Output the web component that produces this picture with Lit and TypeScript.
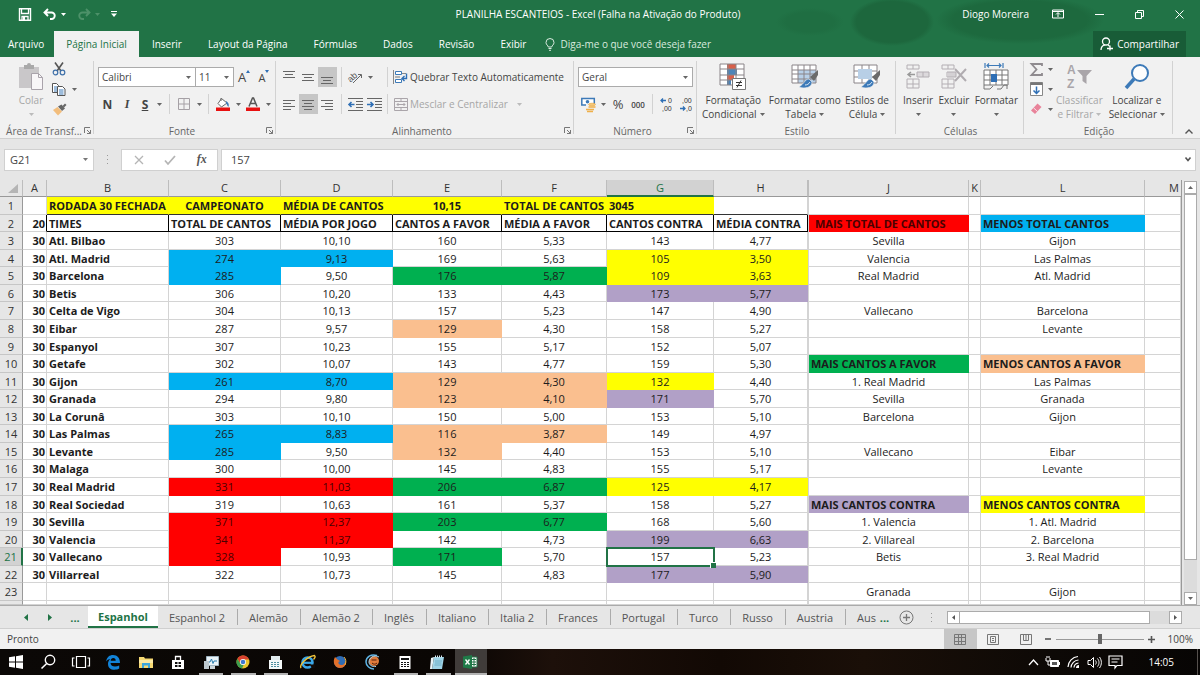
import { LitElement, html, css, svg, nothing } from "lit";
import type { TemplateResult } from "lit";
import { customElement, state } from "lit/decorators.js";
import { classMap } from "lit/directives/class-map.js";

const base = css`
  * { box-sizing: border-box; }
  button, select, input {
    font: inherit; color: inherit; margin: 0; padding: 0;
    border: 0; border-radius: 0; background: none;
  }
  button { display: flex; align-items: center; justify-content: center; white-space: nowrap; }
  svg { display: block; flex: none; overflow: visible; }
  svg text { font-family: "Liberation Sans", sans-serif; }
`;

const icon = (w: number, h: number, body: unknown) =>
  html`<svg width=${w} height=${h} viewBox="0 0 ${w} ${h}" fill="none" aria-hidden="true">${body}</svg>`;

const caret = (color = "#666") => icon(5, 3, svg`<path d="M0 0h5L2.5 3z" fill=${color}/>`);

const cells = (x: number, y: number, w: number, h: number, c: number, r: number, stroke: string) => {
  let d = `M${x} ${y}h${w}v${h}h${-w}z`;
  for (let i = 1; i < c; i++) d += `M${x + Math.round((w * i) / c)} ${y}v${h}`;
  for (let i = 1; i < r; i++) d += `M${x} ${y + Math.round((h * i) / r)}h${w}`;
  return svg`<path d=${d} stroke=${stroke} fill="none"/>`;
};

const lines = (rows: number[][]) =>
  svg`<path d=${rows.map(([x, y, w]) => `M${x} ${y}h${w}`).join("")} stroke="#666"/>`;

const brush = svg`
  <path d="M27 7 19 14l4 4 4-6z" fill="#6b6b6b"/>
  <path d="M18 16c-4 0-4 4-10 8 5 2 13 1 13-5z" fill="#3d7ab8" stroke="#f1f1f1" stroke-width=".6"/>
  <path d="M14 22c2 0 4-1 5-3" stroke="#dceaf6"/>`;

const I = {
  save: icon(14, 13, svg`<path d="M1.500.8h11v11.500h-11z" stroke="#fff" stroke-width="1.400"/><path d="M3.500 1v4.500h7V1M4 12V8.500h6V12" stroke="#fff" stroke-width="1.300"/><path d="M5 9h2v3H5z" fill="#fff"/>`),
  undo: icon(14, 12, svg`<path d="M5 1 1.500 4.500 5 8M2 4.500h6.500a3.200 3.200 0 0 1 0 6.500H7" stroke="#fff" stroke-width="1.900"/>`),
  redo: icon(14, 12, svg`<path d="M9 1l3.500 3.500L9 8M12 4.500H5.500a3.200 3.200 0 0 0 0 6.500H7" stroke="#4d9169" stroke-width="1.900"/>`),
  custom: icon(6, 6, svg`<path d="M0 .5h6" stroke="#fff"/><path d="M0 2.500h6L3 6z" fill="#fff"/>`),
  bulb: icon(10, 13, svg`<path d="M3.300 9C3 7.300 1 6.800 1 4.500a4 4 0 0 1 8 0C9 6.800 7 7.300 6.700 9zM3.500 10.500h3M4 12.300h2" stroke="#d9eadf"/>`),
  person: icon(13, 14, svg`<circle cx="6" cy="4.500" r="3.500" stroke="#fff" stroke-width="1.300"/><path d="M1 13c0-3 2-4.700 4-5.200M8 8l2 1.500M7 11.500h6M10 8.500v5" stroke="#fff" stroke-width="1.300"/>`),
  ribbonOpt: icon(12, 10, svg`<path d="M.5 1h11v8H.5zM.5 2.500h11M6 8V4M4 5.500l2-2 2 2" stroke="#fff"/>`),
  min: icon(9, 9, svg`<path d="M0 4.500h9" stroke="#fff"/>`),
  restore: icon(9, 9, svg`<path d="M.5 2.500h6v6h-6zM2.500 2.500v-2h6v6h-2" stroke="#fff"/>`),
  close: icon(9, 9, svg`<path d="M.5.5l8 8M8.500.5l-8 8" stroke="#fff"/>`),
  paste: icon(26, 28, svg`<path d="M1 4h20v21H1z" fill="#c9c7c9"/><path d="M6 2h3a2 2 0 0 1 4 0h3v4H6z" fill="#a9a9a9"/><path d="M13.500 10.500h7l4 4v12h-11z" fill="#f8f6f8" stroke="#a9a3ab"/><path d="M20.500 10.500v4h4" stroke="#a9a3ab"/>`),
  cut: icon(14, 14, svg`<path d="M3 .5 9 9M11 .5 5 9" stroke="#555" stroke-width="1.600"/><circle cx="3.500" cy="10.500" r="2.300" stroke="#3d6fa8" stroke-width="1.200"/><circle cx="10.500" cy="10.500" r="2.300" stroke="#3d6fa8" stroke-width="1.200"/>`),
  copy: icon(14, 13, svg`<path d="M.5.5h4l2 2v7h-6z" fill="#fff" stroke="#555"/><path d="M2 4h3M2 6h3M2 8h3" stroke="#3d7ab8"/><path d="M5.500 3.500h5l2.500 2.500v6.500H5.500z" fill="#fff" stroke="#555"/><path d="M7 7h4.500M7 9h4.500M7 11h4.500" stroke="#3d7ab8"/>`),
  painter: icon(15, 13, svg`<path d="M10.500 3 13 .5l1.500 1.500L12 4.500z" fill="#666"/><path d="M6 3.500 9.500 1.500l3.500 4L10 8z" fill="#666"/><path d="M5.500 4 1 7l5 5.500 4-4z" fill="#f2bd7c"/>`),
  borders: icon(12, 12, svg`<path d="M.5.5h11v11H.5zM6 .5v11M.5 6h11" stroke="#a5a0a5"/>`),
  bucket: icon(14, 14, svg`<path d="M5.500 1.500 11 6 5.500 10 2 6.500zM5 4V1" stroke="#666" fill="#fff"/><path d="M10 4c2 1 3.500 3 2.500 6-1.500-1-1.500-3-2.500-4z" fill="#3d7ab8"/><path d="M0 10.500h14V14H0z" fill="#e81010"/>`),
  fontColor: icon(14, 14, svg`<path d="M3 9.500 6.500 1h1L11 9.500M4.500 6.500h5" stroke="#555" stroke-width="1.500"/><path d="M0 10.500h14V14H0z" fill="#e81010"/>`),
  orient: icon(15, 14, svg`<text x="0" y="10" font-size="9" fill="#555" transform="rotate(-42 5 8)">ab</text><path d="M5 13 13 5M10 4.500h3.500V8" stroke="#666"/>`),
  outdent: icon(15, 13, svg`${lines([[8, 3.5, 7], [8, 6.5, 7], [8, 9.5, 7], [0, 12.5, 15], [0, .5, 15]])}<path d="M6.500 6.500H1M3.500 4 1 6.500 3.500 9" stroke="#2f6fb5" stroke-width="1.600"/>`),
  indent: icon(15, 13, svg`${lines([[8, 3.5, 7], [8, 6.5, 7], [8, 9.5, 7], [0, 12.5, 15], [0, .5, 15]])}<path d="M0 6.500h5.500M3.500 4 6 6.500 3.500 9" stroke="#2f6fb5" stroke-width="1.600"/>`),
  wrap: icon(15, 14, svg`<path d="M.5 0v14M8 3.500h5" stroke="#888"/><path d="M2.500 1.500h6v3h-6zM2.500 9.500h6v3h-6z" fill="#fff" stroke="#3d7ab8"/><path d="M2 7h5" stroke="#777"/><path d="M13.500 3.500v5H9.500M11.500 6 9 8.500 11.500 11" stroke="#2f6fb5" stroke-width="1.400"/>`),
  merge: icon(14, 13, svg`<path d="M.5.5h13v12H.5zM.5 3.500h13M.5 9.500h13M7 .5v3M7 9.500v3M3 6.500h8M4.500 5 3 6.500 4.500 8M9.500 5 11 6.500 9.500 8" stroke="#aaa5aa"/>`),
  money: icon(15, 15, svg`<path d="M.8 1.500h12.500v6.500H.8z" fill="#fff" stroke="#3d7ab8" stroke-width="1.500"/><circle cx="6.500" cy="4.700" r="1.800" fill="#3d7ab8"/><path d="M5 7h10v8H5z" fill="#f1f1f1"/><ellipse cx="11" cy="7.500" rx="3.500" ry="1.300" fill="#f6c878" stroke="#e9a63c" stroke-width=".6"/><path d="M7.500 10h7M5 12.500h8M6 14.500h6" stroke="#efb04a" stroke-width="1.400"/>`),
  incDec: icon(14, 15, svg`<path d="M6 3.500H1M3 1.500 1 3.500l2 2" stroke="#2f6fb5" stroke-width="1.300"/><text x="8" y="6" font-size="7" fill="#333">0</text><text x="2" y="14" font-size="7" fill="#333">,00</text>`),
  decDec: icon(14, 15, svg`<text x="2" y="6" font-size="7" fill="#333">,00</text><path d="M0 11.500h5M3 9.500l2 2-2 2" stroke="#2f6fb5" stroke-width="1.300"/><text x="6" y="14" font-size="7" fill="#333">,0</text>`),
  cond: icon(28, 28, svg`<path d="M1 1h24v21H1z" fill="#fff"/><path d="M8 1h7v5H8zM8 12h7v5H8z" fill="#d8604a"/><path d="M8 6h10v6H8zM8 17h4v5H8z" fill="#4d84b8"/><path d="M15 1h2v5h-2z" fill="#d8604a"/>${cells(1, 1, 24, 21, 3, 4, "#8a8488")}<path d="M13.500 15.500h13v11h-13z" fill="#fff" stroke="#777"/><path d="M17 19.500h6M17 22.500h6M22 17.500l-4 7" stroke="#333"/>`),
  fmtTable: icon(28, 28, svg`<path d="M1 2h24v18H1z" fill="#fff"/><path d="M7 7h18v13H7z" fill="#b8d0e8"/>${cells(1, 2, 24, 18, 4, 4, "#8a8488")}${brush}`),
  cellStyle: icon(28, 28, svg`<path d="M1 2h23v18H1z" fill="#fff"/>${cells(1, 2, 23, 18, 3, 3, "#8a8488")}<path d="M5 6h14v10H5z" fill="#b8cfe6"/>${brush}`),
  insert: icon(24, 28, svg`${cells(1, 2, 12, 4, 2, 1, "#b3aeb3")}<path d="M11 9h12v5H11z" fill="#dcd9dc"/>${cells(11, 9, 12, 5, 2, 1, "#b3aeb3")}${cells(1, 16, 12, 9, 2, 2, "#b3aeb3")}<path d="M9 11.500H2M5 9l-3 2.500L5 14" stroke="#999" stroke-width="1.500"/>`),
  del: icon(26, 28, svg`${cells(1, 2, 12, 4, 2, 1, "#b3aeb3")}<path d="M7 9h8v5H7z" fill="#d4d1d4"/>${cells(6, 9, 9, 5, 1, 1, "#b3aeb3")}${cells(1, 16, 12, 9, 2, 2, "#b3aeb3")}<path d="M14 6l11 12M25 6 14 18" stroke="#b0acb0" stroke-width="2"/>`),
  format: icon(26, 28, svg`<path d="M2 0v5M20 0v5M4 2.500h14M6 .5l-2 2 2 2M16 .5l2 2-2 2" stroke="#3d7ab8" stroke-width="1.200"/><path d="M1 7h24v15H1z" fill="#fff"/>${cells(1, 7, 24, 15, 4, 3, "#777")}<path d="M8 11h6v8H8z" fill="#2f6fb5"/><path d="M1 22v4h6l3-3M14 26h4l3-4h3v4" stroke="#777"/>`),
  sigma: icon(13, 13, svg`<path d="M12 3V1H1.500l5 5.500-5 5.500H12v-2" stroke="#8f8b8f" stroke-width="1.800"/>`),
  fill: icon(13, 14, svg`<path d="M.5.5h12v13H.5z" fill="#fff" stroke="#888"/><path d="M.5.5h12V3H.5z" fill="#777"/><path d="M6.500 4.500V11M3.500 8.500l3 3 3-3" stroke="#2f6fb5" stroke-width="1.500"/>`),
  eraser: icon(12, 12, svg`<path d="M7.500.5 11.500 4 5 11 1 7.500z" fill="#e8839a"/><path d="M3.500 4.800 7.500 8.500" stroke="#fbe4ea"/>`),
  sort: icon(26, 28, svg`<text x="1" y="11" font-size="12" fill="#a9a5a9" font-weight="700">A</text><text x="1" y="25" font-size="12" fill="#a9a5a9" font-weight="700">Z</text><path d="M11 7h15l-5.500 6v8l-4-3v-5z" fill="#a9a5a9"/>`),
  find: icon(26, 28, svg`<circle cx="16" cy="10" r="8" stroke="#3d7ab8" stroke-width="2" fill="#fdfdfd"/><path d="M10 16l-8 9" stroke="#3d7ab8" stroke-width="3.500"/>`),
  launcher: icon(7, 7, svg`<path d="M.5 6V.5H6M3 3l3.500 3.500M6.500 3v3.500H3" stroke="#777"/>`),
  chevUp: icon(8, 5, svg`<path d="M.5 4.500 4 1l3.500 3.500" stroke="#555" stroke-width="1.400"/>`),
  chevDown: icon(6, 5, svg`<path d="M.5.5 3 3.500 5.500.5" stroke="#555" stroke-width="1.600"/>`),
  cancel: icon(10, 10, svg`<path d="M1 1l8 8M9 1 1 9" stroke="#b5b5b5" stroke-width="1.300"/>`),
  check: icon(12, 10, svg`<path d="M1 5.500 4 9l7-8" stroke="#b5b5b5" stroke-width="1.800"/>`),
  dots: icon(3, 11, svg`<path d="M1 1h1v1H1zM1 5h1v1H1zM1 9h1v1H1z" fill="#999"/>`),
  plusCircle: icon(15, 15, svg`<circle cx="7.500" cy="7.500" r="6.500" stroke="#777"/><path d="M7.500 4v7M4 7.500h7" stroke="#777" stroke-width="1.300"/>`),
};

type Item = TemplateResult | typeof nothing;
const tool = (label: string, body: unknown, cls = "") =>
  html`<button class="tool ${cls}" aria-label=${label}>${body}</button>`;
const drop = (label: string, cls = "") =>
  html`<button class="drop ${cls}" aria-label="Opções: ${label}">${caret()}</button>`;
const big = (body: unknown, l1: string, l2: string, cls = "") => html`
  <button class="big ${cls}">
    <span class="pic">${body}</span><span>${l1}</span>
    <span class="l2">${l2}${caret(cls.includes("off") ? "#bbb" : "#666")}</span>
  </button>`;
const bars = (...w: number[][]) => icon(13, 13, lines(w));

@customElement("excel-ribbon")
export class ExcelRibbon extends LitElement {
  static styles = [base, css`
    :host { display: flex; height: 82px; background: #f1f1f1; border-bottom: 1px solid #cfcfcf; color: #444; }
    .group { display: flex; flex-direction: column; flex: none; padding: 2px 3px 0 4px; position: relative; }
    .group::after { content: ""; position: absolute; right: 0; top: 4px; bottom: 4px; width: 1px; background: #d2d2d2; }
    .area { display: flex; flex: 1; min-height: 0; }
    .foot { display: flex; align-items: center; height: 15px; font-size: 10px; color: #666; }
    .foot span { flex: 1; text-align: center; white-space: nowrap; }
    .rows { display: flex; flex-direction: column; padding-top: 8px; gap: 7px; }
    .row { display: flex; align-items: center; height: 20px; }
    .tool { width: 20px; height: 20px; }
    .tool.n { width: 19px; }
    .tool.t { width: 16px; }
    .tool.on { background: #c6c6c6; }
    .drop { width: 10px; height: 20px; }
    .drop.w { width: 12px; }
    .sep { width: 1px; height: 20px; background: #d2d2d2; margin: 0 4px; }
    .sep.s { margin: 0 3px; }
    .pair { display: flex; width: 38px; }
    .text { height: 20px; font-size: 10px; gap: 9px; }
    .off { color: #a6a6a6; }
    select {
      appearance: none; height: 20px; border: 1px solid #ababab; padding: 0 3px;
      background: #fff url("data:image/svg+xml,%3Csvg xmlns='http://www.w3.org/2000/svg' width='5' height='3'%3E%3Cpath d='M0 0h5L2.5 3z' fill='%23666'/%3E%3C/svg%3E") no-repeat right 4px center;
    }
    .font { width: 98px; }
    .size { width: 39px; margin-left: -1px; }
    .num { width: 115px; }
    b, i, u { font-size: 12px; font-weight: 700; }
    i { font-family: "Liberation Serif", serif; }
    .grow { font-size: 13px; } .shrink { font-size: 11px; }
    .tool sup { display: block; align-self: flex-start; padding-top: 3px; }
    .stack { display: flex; flex-direction: column; }
    .big { flex-direction: column; justify-content: flex-start; font-size: 10px; line-height: 14px; }
    .pic { display: flex; align-items: flex-end; justify-content: center; height: 34px; padding-bottom: 2px; }
    .l2 { display: flex; align-items: center; gap: 3px; min-height: 14px; }
    .clip { width: 94px; } .fonte { width: 182px; } .alin { width: 298px; } .nume { width: 123px; }
    .esti { width: 199px; } .celu { width: 128px; } .edic { width: 149px; }
    .spread { justify-content: space-between; }
    .esti .spread { padding: 0 4px 0 1px; }
    .celu .spread { padding: 0 3px; }
    .edic .spread { padding: 0 5px 0 0; }
    .clip .area { padding-left: 14px; gap: 5px; }
    .end { flex: 1; display: flex; align-items: flex-end; justify-content: center; padding: 0 0 4px 4px; }
    .pct { font-size: 13px; } .zeros { font-size: 8px; font-weight: 600; }
  `];

  private group(cls: string, name: string, body: unknown, launch: boolean): Item {
    return html`<section class="group ${cls}" aria-label=${name}>
      <div class="area">${body}</div>
      <div class="foot"><span>${name}</span>${launch ? html`<button aria-label="Abrir ${name}">${I.launcher}</button>` : nothing}</div>
    </section>`;
  }

  render() {
    const sep = html`<span class="sep"></span>`;
    const seps = html`<span class="sep s"></span>`;
    return html`
      ${this.group("clip", "Área de Transf...", html`
        ${big(I.paste, "Colar", "", "off")}
        <div class="stack">
          <div class="row">${tool("Recortar", I.cut)}</div>
          <div class="row">${tool("Copiar", I.copy)}${drop("copiar")}</div>
          <div class="row">${tool("Pincel de formatação", I.painter)}</div>
        </div>`, true)}
      ${this.group("fonte", "Fonte", html`<div class="rows">
        <div class="row">
          <select class="font" aria-label="Fonte"><option>Calibri</option></select>
          <select class="size" aria-label="Tamanho da fonte"><option>11</option></select>
          ${tool("Aumentar fonte", html`<span class="grow">A</span><sup>${icon(4, 3, svg`<path d="M0 3h4L2 0z" fill="#2f6fb5"/>`)}</sup>`)}
          ${tool("Diminuir fonte", html`<span class="shrink">A</span><sup>${icon(4, 3, svg`<path d="M0 0h4L2 3z" fill="#2f6fb5"/>`)}</sup>`)}
        </div>
        <div class="row">
          ${tool("Negrito", html`<b>N</b>`, "n")}${tool("Itálico", html`<i>I</i>`)}${tool("Sublinhado", html`<u>S</u>`, "t")}${drop("sublinhado", "w")}
          ${sep}${tool("Bordas", I.borders)}${drop("bordas")}
          ${sep}${tool("Cor de preenchimento", I.bucket)}${drop("preenchimento")}
          ${tool("Cor da fonte", I.fontColor)}${drop("cor da fonte")}
        </div></div>`, true)}
      ${this.group("alin", "Alinhamento", html`<div class="rows">
        <div class="row">
          ${tool("Alinhar em cima", bars([0, .5, 12], [2, 3.5, 8], [0, 6.5, 12]), "n")}
          ${tool("Alinhar no meio", bars([0, 3.5, 12], [2, 6.5, 8], [0, 9.5, 12]), "n")}
          ${tool("Alinhar embaixo", bars([0, 6.5, 12], [2, 9.5, 8], [0, 12.5, 12]), "n on")}
          ${sep}<span class="pair">${tool("Orientação", I.orient, "n")}${drop("orientação")}</span>
          ${seps}${tool("Quebrar texto", I.wrap, "n")}<button class="text">Quebrar Texto Automaticamente</button>
        </div>
        <div class="row">
          ${tool("Alinhar à esquerda", bars([0, 2.5, 12], [0, 5.5, 8], [0, 8.5, 12], [0, 11.5, 8]), "n")}
          ${tool("Centralizar", bars([0, 2.5, 12], [2, 5.5, 8], [0, 8.5, 12], [2, 11.5, 8]), "n on")}
          ${tool("Alinhar à direita", bars([0, 2.5, 12], [4, 5.5, 8], [0, 8.5, 12], [4, 11.5, 8]), "n")}
          ${sep}<span class="pair">${tool("Diminuir recuo", I.outdent, "n")}${tool("Aumentar recuo", I.indent, "n")}</span>
          ${seps}${tool("Mesclar", I.merge, "n")}<button class="text off">Mesclar e Centralizar ${caret("#bbb")}</button>
        </div></div>`, true)}
      ${this.group("nume", "Número", html`<div class="rows">
        <div class="row"><select class="num" aria-label="Formato de número"><option>Geral</option></select></div>
        <div class="row">
          ${tool("Formato de contabilização", I.money)}${drop("contabilização")}
          ${tool("Porcentagem", html`<span class="pct">%</span>`)}${tool("Milhares", html`<span class="zeros">000</span>`)}
          ${sep}${tool("Aumentar casas decimais", I.incDec)}${tool("Diminuir casas decimais", I.decDec)}
        </div></div>`, true)}
      ${this.group("esti", "Estilo", html`<div class="area spread">
        ${big(I.cond, "Formatação", "Condicional")}${big(I.fmtTable, "Formatar como", "Tabela")}${big(I.cellStyle, "Estilos de", "Célula")}</div>`, false)}
      ${this.group("celu", "Células", html`<div class="area spread">
        ${big(I.insert, "Inserir", "")}${big(I.del, "Excluir", "")}${big(I.format, "Formatar", "")}</div>`, false)}
      ${this.group("edic", "Edição", html`
        <div class="stack">
          <div class="row">${tool("Soma", I.sigma, "t")}${drop("soma", "w")}</div>
          <div class="row">${tool("Preencher", I.fill, "t")}${drop("preencher", "w")}</div>
          <div class="row">${tool("Limpar", I.eraser, "t")}${drop("limpar", "w")}</div>
        </div>
        <div class="area spread">${big(I.sort, "Classificar", "e Filtrar", "off")}${big(I.find, "Localizar e", "Selecionar")}</div>`, false)}
      <div class="end"><button aria-label="Recolher a faixa de opções">${I.chevUp}</button></div>`;
  }
}

type Cell = { v?: string; f?: string };
const COLS = "ABCDEFGHIJKLM".split("");

/* team, total, média, a favor, média, contra, média, J, L, fill code for C..H */
const TEAMS: string[][] = [
  ["Atl. Bilbao", "303", "10,10", "160", "5,33", "143", "4,77", "Sevilla", "Gijon", "------"],
  ["Atl. Madrid", "274", "9,13", "169", "5,63", "105", "3,50", "Valencia", "Las Palmas", "bb--yy"],
  ["Barcelona", "285", "9,50", "176", "5,87", "109", "3,63", "Real Madrid", "Atl. Madrid", "b-ggyy"],
  ["Betis", "306", "10,20", "133", "4,43", "173", "5,77", "", "", "----pp"],
  ["Celta de Vigo", "304", "10,13", "157", "5,23", "147", "4,90", "Vallecano", "Barcelona", "------"],
  ["Eibar", "287", "9,57", "129", "4,30", "158", "5,27", "", "Levante", "--o---"],
  ["Espanyol", "307", "10,23", "155", "5,17", "152", "5,07", "", "", "------"],
  ["Getafe", "302", "10,07", "143", "4,77", "159", "5,30", "#gMAIS CANTOS A FAVOR", "#oMENOS CANTOS A FAVOR", "------"],
  ["Gijon", "261", "8,70", "129", "4,30", "132", "4,40", "1. Real Madrid", "Las Palmas", "bbooy-"],
  ["Granada", "294", "9,80", "123", "4,10", "171", "5,70", "Sevilla", "Granada", "--oop-"],
  ["La Corunâ", "303", "10,10", "150", "5,00", "153", "5,10", "Barcelona", "Gijon", "------"],
  ["Las Palmas", "265", "8,83", "116", "3,87", "149", "4,97", "", "", "bboo--"],
  ["Levante", "285", "9,50", "132", "4,40", "153", "5,10", "Vallecano", "Eibar", "b-o---"],
  ["Malaga", "300", "10,00", "145", "4,83", "155", "5,17", "", "Levante", "------"],
  ["Real Madrid", "331", "11,03", "206", "6,87", "125", "4,17", "", "", "rrggyy"],
  ["Real Sociedad", "319", "10,63", "161", "5,37", "158", "5,27", "#pMAIS CANTOS CONTRA", "#yMENOS CANTOS CONTRA", "------"],
  ["Sevilla", "371", "12,37", "203", "6,77", "168", "5,60", "1. Valencia", "1. Atl. Madrid", "rrgg--"],
  ["Valencia", "341", "11,37", "142", "4,73", "199", "6,63", "2. Villareal", "2. Barcelona", "rr--pp"],
  ["Vallecano", "328", "10,93", "171", "5,70", "157", "5,23", "Betis", "3. Real Madrid", "r-g---"],
  ["Villarreal", "322", "10,73", "145", "4,83", "177", "5,90", "", "", "----pp"],
];

const side = (s: string): Cell => (s[0] === "#" ? { v: s.slice(2), f: `${s[1]} head` } : { v: s });

const ROWS: Cell[][] = [
  [{}, { v: "RODADA 30 FECHADA", f: "y head" }, { v: "CAMPEONATO", f: "y head mid" }, { v: "MÉDIA DE CANTOS", f: "y head" },
   { v: "10,15", f: "y head mid" }, { v: "TOTAL DE CANTOS", f: "y head" }, { v: "3045", f: "y head" }, {}, {}, {}, {}, {}, {}],
  [{ v: "20" }, ...["TIMES", "TOTAL DE CANTOS", "MÉDIA POR JOGO", "CANTOS A FAVOR", "MÉDIA A FAVOR", "CANTOS CONTRA", "MÉDIA CONTRA"].map((v) => ({ v, f: "head" })),
   {}, { v: "MAIS TOTAL DE CANTOS", f: "r head in" }, {}, { v: "MENOS TOTAL CANTOS", f: "b head" }, {}],
  ...TEAMS.map((t) => [
    { v: "30" }, { v: t[0], f: "head" },
    ...t.slice(1, 7).map((v, i) => ({ v, f: t[9][i] === "-" ? "" : t[9][i] })),
    {}, side(t[7]), {}, side(t[8]), {},
  ]),
  [{}, {}, {}, {}, {}, {}, {}, {}, {}, { v: "Granada" }, {}, { v: "Gijon" }, {}],
  COLS.map(() => ({})),
];

@customElement("sheet-grid")
export class SheetGrid extends LitElement {
  static styles = [base, css`
    :host { display: flex; min-height: 0; background: #e6e6e6; }
    table {
      flex: 1; min-width: 0; display: grid; overflow: hidden; background: #fff;
      grid-template-rows: 17px repeat(23, minmax(0, 1fr)) 4px;
      font-size: 11px; line-height: 17px; color: #1c1c1c; border-right: 1px solid #999;
    }
    thead, tbody { display: contents; }
    tr { display: grid; grid-template-columns: 23px 24px 122px 112px 112px 109px 105px 107px 94px 1px 160px 12px 164px minmax(0, 1fr); min-height: 0; }
    th, td { padding: 0; min-width: 0; min-height: 0; font-weight: 400; text-align: center; white-space: nowrap; }
    th { background: #e6e6e6; color: #333; }
    thead th { border-bottom: 1px solid #999; border-right: 1px solid #bdbdbd; line-height: 16px; }
    thead th:last-child { text-align: right; padding-right: 2px; border-right: 0; }
    thead th.on { background: #d2d2d2; color: #217346; border-bottom: 2px solid #217346; }
    thead th:first-child { display: flex; justify-content: flex-end; align-items: flex-end; padding: 0 4px 3px 0; }
    tbody th { border-right: 1px solid #999; border-bottom: 1px solid #c6c6c6; }
    tbody th.on { background: #d2d2d2; color: #217346; border-right: 2px solid #217346; }
    td { border-right: 1px solid #d4d4d4; border-bottom: 1px solid #d4d4d4; }
    .colA { text-align: right; font-weight: 700; padding-right: 1px; }
    .head { text-align: left; font-weight: 700; padding-left: 2px; }
    .mid { text-align: center; padding: 0; }
    .in { padding-left: 6px; }
    .y { background: #ff0; border-color: #ff0; }
    .b { background: #00b0f0; border-color: #00b0f0; }
    .g { background: #00b050; border-color: #00b050; }
    .o { background: #fabf8f; border-color: #fabf8f; }
    .p { background: #b1a0c7; border-color: #b1a0c7; }
    .r { background: #f00; border-color: #f00; color: #4a0000; }
    .u { border-bottom-color: #333; }
    .k { border-right-color: #000; border-bottom-color: #000; }
    .ka { border-right-color: #000; }
    .sel { position: relative; outline: 2px solid #217346; outline-offset: -1px; z-index: 1; }
    .sel::after { content: ""; position: absolute; right: -3px; bottom: -3px; width: 5px; height: 5px; background: #217346; border: 1px solid #fff; border-width: 1px 0 0 1px; }
    .vbar { width: 18px; display: flex; flex-direction: column; align-items: center; padding: 1px 1px 0 0; }
    .vbar button { width: 13px; height: 13px; background: #fff; border: 1px solid #ababab; flex: none; }
    .track { flex: 1; width: 13px; background: #dcdcdc; display: flex; flex-direction: column; }
    .thumb { flex: 0 0 92%; background: #fff; border: 1px solid #ababab; }
  `];

  private cls(c: number, r: number, f = "") {
    const inHead = c >= 1 && c <= 7;
    return [
      f, c === 0 ? "colA" : "", r === 0 && inHead ? "u" : "", r === 1 && inHead ? "k" : "",
      r === 1 && c === 0 ? "ka" : "", c === 6 && r === 20 ? "sel" : "",
    ].filter(Boolean).join(" ");
  }

  render() {
    return html`
      <table aria-label="Planilha Espanhol">
        <thead><tr>
          <th>${icon(10, 9, svg`<path d="M10 0v9H0z" fill="#b5b5b5"/>`)}</th>
          ${COLS.map((c) => html`<th scope="col" class=${c === "G" ? "on" : ""}>${c === "I" ? nothing : c}</th>`)}
        </tr></thead>
        <tbody>${ROWS.map((row, r) => html`<tr>
          <th scope="row" class=${r === 20 ? "on" : ""}>${r < 23 ? r + 1 : nothing}</th>
          ${row.map((cell, c) => html`<td class=${this.cls(c, r, cell.f)}>${cell.v}</td>`)}
        </tr>`)}</tbody>
      </table>
      <div class="vbar">
        <button aria-label="Rolar para cima">${icon(5, 3, svg`<path d="M0 3h5L2.500 0z" fill="#666"/>`)}</button>
        <div class="track"><div class="thumb"></div></div>
        <button aria-label="Rolar para baixo">${caret()}</button>
      </div>`;
  }
}

const APPS: { name: string; open?: boolean; on?: boolean; g: TemplateResult }[] = [
  { name: "Iniciar", g: icon(16, 16, svg`<path d="M1 3.200 7 2.300v5.200H1zM8 2.200 15 1v6.500H8zM1 8.500h6v5.200l-6-.9zM8 8.500h7V15l-7-1.200z" fill="#fff"/>`) },
  { name: "Pesquisar", g: icon(16, 16, svg`<circle cx="10" cy="6" r="4.700" stroke="#fff" stroke-width="1.400"/><path d="M6.700 9.500 1.500 14.500" stroke="#fff" stroke-width="1.600"/>`) },
  { name: "Visão de tarefas", g: icon(18, 14, svg`<path d="M4.500 1.500h9v11h-9zM2.500 3H.5v8h2M15.500 3h2v8h-2" stroke="#fff" stroke-width="1.200"/>`) },
  { name: "Edge", g: icon(16, 16, svg`<path d="M1 7.500C2 3 4.500 1 8 1c4.500 0 7 3 7 8H5.500c.2 2.500 2 3.500 4.500 3.500 1.500 0 3-.4 4.200-1v3C13 15.300 11.500 15.700 9.500 15.700c-4 0-6.500-2-6.500-6 0-2 1-3.700 2.500-4.700C3.500 5.300 2 6.200 1 7.500zM5.700 6.800h5C10.700 5 9.800 4 8.300 4S5.900 5 5.700 6.800z" fill="#1283d8"/>`) },
  { name: "Explorador", g: icon(16, 14, svg`<path d="M1 2h5l1 1.500h8V13H1z" fill="#f5d873"/><path d="M1 5h14v3H1z" fill="#fbe9a4"/><path d="M4 8h8v5h-2v-2.500H6V13H4z" fill="#3da6dc"/>`) },
  { name: "Loja", g: icon(14, 15, svg`<path d="M1 5h12v9H1z" fill="#fff"/><path d="M4.500 5V1.500h5V5" stroke="#fff" stroke-width="1.300"/><path d="M4 7h2.500v2H4zM7.500 7H10v2H7.500zM4 10h2.500v2H4zM7.500 10H10v2H7.500z" fill="#111"/>`) },
  { name: "Monitor", open: true, g: icon(16, 15, svg`<path d="M3.500 1.500h12v9h-12z" fill="#e9f3f8" stroke="#9fb4c0"/><path d="M5 7h2l1.500-3L10 8.500 11 6h3" stroke="#2a7fb0"/><path d="M1 6h5v8H1z" fill="#bcc8ce"/><path d="M7 11h5v3H7z" fill="#c9d3d8"/>`) },
  { name: "Chrome", open: true, g: icon(14, 14, svg`<circle cx="7" cy="7" r="6.500" fill="#e9c52e"/><path d="M1.400 3.700A6.500 6.500 0 0 1 13 4.500H7L4 8z" fill="#d8412f"/><path d="M1.400 3.700 4.600 9 7.500 10 6 13.500A6.500 6.500 0 0 1 1.400 3.700z" fill="#3c9d4e"/><circle cx="7" cy="7" r="3" fill="#fff"/><circle cx="7" cy="7" r="2.300" fill="#3f79d0"/>`) },
  { name: "Impressora", open: true, g: icon(15, 15, svg`<path d="M3 1h9v4H3z" fill="#dfe9ec"/><path d="M1 5h13v9H1z" fill="#f4f8f9"/><path d="M3 7.500h9M3 9.500h9M3 11.500h9" stroke="#4f8f9f" stroke-dasharray="2 1"/>`) },
  { name: "Internet Explorer", g: icon(17, 16, svg`<circle cx="8.500" cy="8.500" r="5" stroke="#3aa7e8" stroke-width="2.600"/><path d="M4 8.800h9" stroke="#3aa7e8" stroke-width="2.200"/><path d="M10.500 10.500H16V14h-3z" fill="#120a07"/><path d="M2 14C0 11 8 2.500 15.500 1.500c1.500 1 0 3-1 4" stroke="#efc43c" stroke-width="1.400"/>`) },
  { name: "Firefox", g: icon(14, 14, svg`<circle cx="7" cy="7" r="6" fill="#2e6cb5"/><path d="M2 2c-3 5 0 11 5 11 4 0 6.500-3 6-7.500C12 8 11 10 8.500 10 6 10 5 8.500 5.500 7L7 6 4.500 4.500z" fill="#e2702a"/><path d="M11 2c2 2 2.500 5 1 8" stroke="#f2b13a"/>`) },
  { name: "Gamer", g: icon(16, 16, svg`<circle cx="9" cy="7" r="5" fill="#e07b3c"/><path d="M12 1.500C6-.5 1 3 1 8c0 4 4 7 8 7" stroke="#5fb4e4" stroke-width="1.500"/><path d="M14 3C9 0 4 4 4 8c0 3 3 5 7 4.500" stroke="#a9d9f2"/><path d="M6.500 6h5M7 9c1.500 1.500 3.500 1.500 5 0" stroke="#53210d"/>`) },
  { name: "Calculadora", open: true, g: icon(12, 15, svg`<path d="M.5 1h11v13H.5z" fill="#fff"/><path d="M2 3h8v2H2z" fill="#111"/><path d="M2 7.500h8M2 9.500h8M2 11.500h8" stroke="#111" stroke-dasharray="2 1"/>`) },
  { name: "Bloco de notas", open: true, g: icon(15, 15, svg`<path d="M4 2h10l-2 12H2z" fill="#9fd3e6"/><path d="M1 3l3-1-2 12H0z" fill="#e8f4f8"/><path d="M5 1.500h8" stroke="#dfeef3" stroke-dasharray="1 1" stroke-width="2"/><path d="M5 6h7M5 8h6.500M4.500 10h7" stroke="#6fb0c8"/>`) },
  { name: "Excel", open: true, on: true, g: icon(15, 14, svg`<path d="M8 2h6v10H8z" fill="#fff" stroke="#217346"/><path d="M9 4.500h4M9 7h4M9 9.500h4M11 3v8" stroke="#217346"/><path d="M0 1.500 9 0v14L0 12.500z" fill="#1f7a48"/><path d="M2.500 4.500l4 5M6.500 4.500l-4 5" stroke="#fff" stroke-width="1.300"/>`) },
];

@customElement("task-bar")
export class TaskBar extends LitElement {
  static styles = [base, css`
    :host { display: flex; height: 26px; color: #fff; font-size: 10px; justify-content: space-between;
      background: linear-gradient(90deg, #0b0806, #0a0604 38%, #1d100a 46%, #120904 60%, #1a0f08 72%, #0d0906 88%, #070504); }
    .apps { display: flex; width: 487px; }
    .app { flex: 1; position: relative; padding-right: 1px; }
    .app.open::after { content: ""; position: absolute; left: 4px; right: 4px; bottom: 0; height: 2px; background: #b3b3b3; }
    .app.on { background: #403c3a; }
    .app.on::after { left: 0; right: 0; }
    .tray { display: flex; align-items: center; gap: 6px; padding-right: 2px; }
    .clock { padding: 0 17px 0 20px; }
    .edge { width: 1px; align-self: stretch; background: #55504d; }
  `];
  render() {
    return html`
      <nav class="apps" aria-label="Barra de tarefas">
        ${APPS.map((a) => html`<button class="app ${classMap({ open: !!a.open, on: !!a.on })}" aria-label=${a.name}>${a.g}</button>`)}
      </nav>
      <div class="tray">
        ${icon(11, 8, svg`<path d="M1 7l4.500-5L10 7" stroke="#fff" stroke-width="1.300"/>`)}
        ${icon(15, 13, svg`<path d="M5.500 4.500h8v6h-8z" fill="#fff" stroke="#fff"/><path d="M14.500 6v3" stroke="#fff"/><path d="M1 2v3h4V2M2 0v2M4 0v2M3 5v4h2" stroke="#fff"/><path d="M7 6h5v3H7z" fill="#111" opacity=".7"/>`)}
        ${icon(15, 14, svg`<path d="M2 12A11 11 0 0 1 12 1.500M5 12.500A8 8 0 0 1 12.500 5M8 12.500A5 5 0 0 1 12.500 8" stroke="#fff" stroke-width="1.200"/><path d="M10 13a3 3 0 0 1 3-3v3z" fill="#fff"/>`)}
        ${icon(15, 13, svg`<path d="M1 4.500h2.500l3-3v10l-3-3H1z" stroke="#fff"/><path d="M8.500 4.500c1 1.500 1 2.500 0 4M10.500 2.500c2 2.500 2 5.500 0 8M12.500 1c2.500 3.500 2.500 7.500 0 11" stroke="#fff"/>`)}
        ${icon(15, 14, svg`<path d="M1 1h13v9.500H9L7 13v-2.500H1zM3.500 4h8M3.500 7h6" stroke="#fff" stroke-width="1.200"/>`)}
        <time class="clock">14:05</time>
        <span class="edge"></span>
      </div>`;
  }
}

const MENU = ["Arquivo", "Página Inicial", "Inserir", "Layout da Página", "Fórmulas", "Dados", "Revisão", "Exibir"];
const SHEETS = ["Espanhol", "Espanhol 2", "Alemão", "Alemão 2", "Inglês", "Italiano", "Italia 2", "Frances", "Portugal", "Turco", "Russo", "Austria", "Aus"];

@customElement("app-root")
export class AppRoot extends LitElement {
  static styles = [base, css`
    :host { display: flex; flex-direction: column; height: 100vh; overflow: hidden; background: #e6e6e6;
      font-family: "Open Sans", "Noto Sans", sans-serif; font-size: 10px; color: #444; }
    .top { background:
        radial-gradient(ellipse 42px 24px at right 308px top 22px, #1d673d 85%, transparent),
        radial-gradient(ellipse 34px 14px at right 390px top 22px, #1f6e42 70%, transparent),
        radial-gradient(ellipse 84px 24px at right 180px top 20px, #1d693e 80%, transparent),
        #217346; color: #fff; }
    .title { display: grid; grid-template-columns: 1fr auto 1fr; align-items: center; height: 31px; padding: 0 16px 0 12px; }
    .title h1 { margin: 0; font-size: 10px; font-weight: 400; padding-bottom: 3px; }
    .quick, .win { display: flex; align-items: center; padding-bottom: 3px; }
    .quick { gap: 11px; padding-left: 6px; }
    .quick div { display: flex; gap: 4px; }
    .win { justify-content: flex-end; gap: 31px; }
    .win span { margin-right: -8px; }
    .menu { display: flex; height: 26px; padding-right: 14px; }
    .menu nav { display: flex; }
    .menu nav a { display: flex; align-items: center; padding: 0 13px; color: #fff; text-decoration: none; white-space: nowrap; }
    .menu nav a:first-child { padding: 0 10px 0 8px; }
    .menu nav a.on { background: #f1f1f1; color: #217346; padding: 0 12px; }
    .tell { gap: 5px; padding: 0 6px; color: #d9eadf; }
    .share { margin-left: auto; gap: 4px; padding: 0 7px; background: #185c37; }
    .formula { display: flex; height: 41px; align-items: center; padding: 0 4px; }
    .box { display: flex; align-items: center; height: 22px; background: #fff; border: 1px solid #d0d0d0; }
    .name { width: 90px; padding-right: 5px; }
    .name input { flex: 1; min-width: 0; padding-left: 5px; font-size: 11px; }
    .grip { padding: 0 12px; }
    .fx { width: 97px; justify-content: space-around; padding: 0 0 0 2px; margin-right: 3px; }
    .fx i { font: italic 700 12px "Liberation Serif", serif; color: #555; }
    .value { flex: 1; padding-right: 4px; }
    .value input { flex: 1; min-width: 0; padding-left: 9px; font-size: 11px; }
    sheet-grid { flex: 1; }
    .tabs { display: flex; align-items: center; height: 24px; border-top: 1px solid #ababab; border-bottom: 1px solid #cfcfcf; font-size: 11px; color: #555; padding-right: 18px; background: #e6e6e6; }
    .nav { width: 24px; }
    .navs { display: flex; padding-left: 14px; }
    .dots { color: #217346; font-weight: 700; width: 26px; }
    .more { width: 17px; }
    .strip { display: flex; align-items: center; height: 22px; }
    .tab { padding: 0 12px 0 11px; height: 16px; border-right: 1px solid #ababab; }
    .tab.on { height: 22px; background: #fff; color: #217346; font-weight: 700; border: 0; border-bottom: 2px solid #217346; padding: 1px 10px 0; margin-top: -1px; }
    .tab:last-child { padding-right: 0; border: 0; }
    .add { padding: 0 16px 0 6px; }
    .hbar { flex: 1; display: flex; height: 13px; margin-left: 14px; background: #dcdcdc; }
    .hbar button { width: 13px; background: #fff; border: 1px solid #ababab; }
    .hbar .track { flex: 1; display: flex; }
    .hbar .thumb { flex: 0 0 91%; background: #fff; border: 1px solid #ababab; border-left: 0; }
    .status { display: flex; align-items: center; height: 20px; background: #f1f1f1; padding: 0 7px; }
    .status p { margin: 0 auto 0 0; }
    .view { width: 33px; height: 20px; }
    .view.on { background: #c6c6c6; }
    .zoom { width: 88px; height: 11px; appearance: none; background: linear-gradient(#999, #999) center / 100% 1px no-repeat; margin: 0 2px; }
    .zoom::-webkit-slider-thumb { appearance: none; width: 4px; height: 10px; background: #666; }
    .sign { width: 11px; }
    .pctz { padding-left: 11px; }
  `];

  @state() private sheet = "Espanhol";

  render() {
    return html`
      <header class="top">
        <div class="title">
          <div class="quick">
            <button aria-label="Salvar">${I.save}</button>
            <div><button aria-label="Desfazer">${I.undo}</button><button aria-label="Lista desfazer">${caret("#fff")}</button></div>
            <div><button aria-label="Refazer">${I.redo}</button><button aria-label="Lista refazer">${caret("#4d9169")}</button></div>
            <button aria-label="Personalizar">${I.custom}</button>
          </div>
          <h1>PLANILHA ESCANTEIOS - Excel (Falha na Ativação do Produto)</h1>
          <div class="win">
            <span>Diogo Moreira</span>
            <button aria-label="Opções da faixa">${I.ribbonOpt}</button>
            <button aria-label="Minimizar">${I.min}</button>
            <button aria-label="Restaurar">${I.restore}</button>
            <button aria-label="Fechar">${I.close}</button>
          </div>
        </div>
        <div class="menu">
          <nav>${MENU.map((m) => html`<a href="#" class=${m === "Página Inicial" ? "on" : ""}>${m}</a>`)}</nav>
          <button class="tell">${I.bulb}Diga-me o que você deseja fazer</button>
          <button class="share">${I.person}Compartilhar</button>
        </div>
      </header>
      <excel-ribbon></excel-ribbon>
      <div class="formula">
        <div class="box name"><input aria-label="Caixa de nome" value="G21">${caret("#777")}</div>
        <span class="grip">${I.dots}</span>
        <div class="box fx">
          <button aria-label="Cancelar">${I.cancel}</button>
          <button aria-label="Inserir">${I.check}</button>
          <button aria-label="Inserir função"><i>fx</i></button>
        </div>
        <div class="box value"><input aria-label="Barra de fórmulas" value="157">${I.chevDown}</div>
      </div>
      <sheet-grid></sheet-grid>
      <div class="tabs">
        <div class="navs">
          <button class="nav" aria-label="Anterior">${icon(4, 7, svg`<path d="M4 0v7L0 3.500z" fill="#217346"/>`)}</button>
          <button class="nav" aria-label="Próxima">${icon(4, 7, svg`<path d="M0 0v7l4-3.500z" fill="#217346"/>`)}</button>
          <button class="dots" aria-label="Planilhas anteriores">...</button>
        </div>
        <div class="strip" role="tablist">${SHEETS.map((s) => html`
          <button role="tab" class="tab ${s === this.sheet ? "on" : ""}" aria-selected=${s === this.sheet ? "true" : "false"}
            @click=${() => (this.sheet = s)}>${s}</button>`)}
        </div>
        <button class="dots more" aria-label="Mais planilhas">...</button>
        <button class="add" aria-label="Nova planilha">${I.plusCircle}</button>
        ${I.dots}
        <div class="hbar">
          <button aria-label="Rolar à esquerda">${icon(3, 5, svg`<path d="M3 0v5L0 2.500z" fill="#555"/>`)}</button>
          <div class="track"><div class="thumb"></div></div>
          <button aria-label="Rolar à direita">${icon(3, 5, svg`<path d="M0 0v5l3-2.500z" fill="#555"/>`)}</button>
        </div>
      </div>
      <footer class="status">
        <p>Pronto</p>
        <button class="view on" aria-label="Normal">${icon(12, 11, cells(.5, .5, 11, 10, 3, 3, "#777"))}</button>
        <button class="view" aria-label="Layout da página">${icon(12, 11, svg`<path d="M.5.5h11v10H.5zM3.500 2.500h5v6h-5zM5 4.500h2M5 6.500h2" stroke="#777"/>`)}</button>
        <button class="view" aria-label="Quebra de página">${icon(12, 11, svg`<path d="M.5.5h11v10H.5zM3.500.5v6h5v-6M6 .5v6" stroke="#777"/>`)}</button>
        <button class="sign" aria-label="Reduzir">${icon(6, 6, svg`<path d="M0 3h6" stroke="#555" stroke-width="1.600"/>`)}</button>
        <input class="zoom" type="range" min="0" max="100" value="50" aria-label="Zoom">
        <button class="sign" aria-label="Ampliar">${icon(7, 7, svg`<path d="M0 3.500h7M3.500 0v7" stroke="#555" stroke-width="1.600"/>`)}</button>
        <span class="pctz">100%</span>
      </footer>
      <task-bar></task-bar>`;
  }
}
